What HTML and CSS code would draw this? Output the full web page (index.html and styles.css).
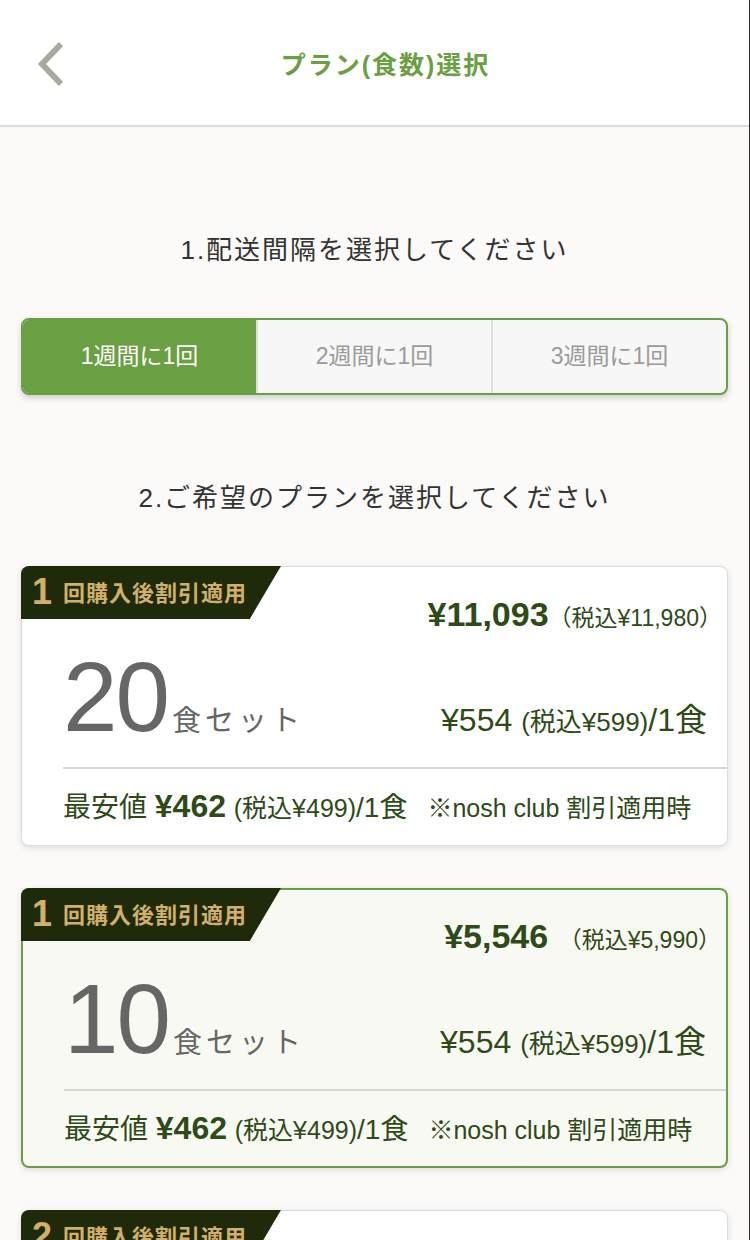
FILE: index.html
```html
<!DOCTYPE html>
<html lang="ja">

<head>
  <meta charset="UTF-8" />
  <meta name="viewport" content="width=device-width, initial-scale=1.0" />
  <title>プラン(食数)選択</title>
  <link rel="stylesheet" href="styles.css">
</head>

<body>
  <div id="page">
    <header class="topbar">
      <a class="back" href="#">
        <svg width="30" height="46" viewBox="0 0 30 46">
          <polyline points="25,3 6,23 25,43" fill="none" stroke="#a9aa9f" stroke-width="6" />
        </svg>
      </a>
      <h1>プラン(食数)選択</h1>
    </header>

    <main class="content">
      <h2 class="step step-first">1.配送間隔を選択してください</h2>
      <div class="tabs">
        <div class="tab active">1週間に1回</div>
        <div class="tab">2週間に1回</div>
        <div class="tab">3週間に1回</div>
      </div>

      <h2 class="step">2.ご希望のプランを選択してください</h2>

      <div class="card">
        <div class="ribbon"><span class="num">1</span>回購入後割引適用</div>
        <div class="total"><b>¥11,093</b><span class="tax">（税込¥11,980）</span></div>
        <div class="main-row">
          <div class="count"><span class="big">20</span><span class="unit">食セット</span></div>
          <div class="per">¥554 <small>(税込¥599)</small>/1食</div>
        </div>
        <div class="lowest">最安値 <b>¥462</b> <small>(税込¥499)</small>/1食<span class="note">※nosh club 割引適用時</span></div>
      </div>

      <div class="card selected">
        <div class="ribbon"><span class="num">1</span>回購入後割引適用</div>
        <div class="total"><b>¥5,546</b> <span class="tax">（税込¥5,990）</span></div>
        <div class="main-row">
          <div class="count"><span class="big">10</span><span class="unit">食セット</span></div>
          <div class="per">¥554 <small>(税込¥599)</small>/1食</div>
        </div>
        <div class="lowest">最安値 <b>¥462</b> <small>(税込¥499)</small>/1食<span class="note">※nosh club 割引適用時</span></div>
      </div>

      <div class="card">
        <div class="ribbon"><span class="num">2</span>回購入後割引適用</div>
        <div class="total"><b>¥5,546</b> <span class="tax">（税込¥5,990）</span></div>
      </div>
    </main>
  </div>
</body>

</html>
```

FILE: styles.css
```css
html,
body {
  margin: 0;
  padding: 0;
  height: 100%;
  overflow: hidden;
}

body {
  font-family: "Liberation Sans", "Noto Sans CJK JP", sans-serif;
  background-color: #fbfaf8;
  color: #333;
}

#page {
  width: 750px;
  min-height: 1240px;
  box-sizing: border-box;
  border-right: 1px solid #2a2a2a;
}

.topbar {
  position: relative;
  height: 125px;
  background-color: #fff;
  border-bottom: 2px solid #dcdcdc;
  display: flex;
  justify-content: center;
  align-items: center;
}

.topbar h1 {
  margin: 0 0 0 22px;
  font-size: 25px;
  font-weight: bold;
  letter-spacing: 2px;
  color: #6aa043;
}

.back {
  position: absolute;
  left: 36px;
  top: 41px;
  display: block;
  width: 30px;
  height: 46px;
}

.content {
  padding: 0 21px 0 21px;
}

.step {
  margin: 83px 0 48px;
  font-size: 26px;
  font-weight: normal;
  line-height: 40px;
  letter-spacing: 2px;
  text-align: center;
  color: #333;
}

.step-first {
  margin-top: 103px;
}

/* 配送間隔 */
.tabs {
  display: flex;
  height: 77px;
  box-sizing: border-box;
  border: 2px solid #6aa043;
  border-radius: 8px;
  overflow: hidden;
  background-color: #f7f7f7;
  box-shadow: 0 3px 6px rgba(0, 0, 0, 0.18);
}

.tab {
  flex: 1;
  display: flex;
  justify-content: center;
  align-items: center;
  padding-bottom: 6px;
  font-size: 23px;
  color: #9a9a9a;
  border-left: 2px solid #dedede;
}

.tab:first-child {
  border-left: none;
}

.tab.active {
  background-color: #6aa043;
  color: #fff;
}

/* プラン */
.card {
  position: relative;
  height: 280px;
  box-sizing: border-box;
  margin-bottom: 42px;
  padding: 30px 0 0 0;
  background-color: #fff;
  border: 1px solid #dcdcdc;
  border-radius: 8px;
  box-shadow: 0 2px 6px rgba(0, 0, 0, 0.12);
  color: #2e4a17;
}

.card.selected {
  border: 2px solid #6aa043;
  background-color: #f9f9f3;
  padding-top: 29px;
}

.ribbon {
  position: absolute;
  left: -1px;
  top: -1px;
  width: 260px;
  height: 53px;
  box-sizing: border-box;
  padding: 4px 0 0 11px;
  background-color: #1f2a0a;
  clip-path: polygon(0 0, 100% 0, 88% 100%, 0 100%);
  border-top-left-radius: 8px;
  color: #d2b06a;
  font-size: 22px;
  font-weight: bold;
  line-height: 44px;
  letter-spacing: 1px;
  white-space: nowrap;
}

.selected .ribbon {
  left: -2px;
  top: -2px;
}

.ribbon .num {
  font-size: 36px;
  margin-right: 10px;
  vertical-align: -3px;
}

.total {
  height: 34px;
  line-height: 34px;
  padding-right: 5px;
  text-align: right;
  word-spacing: 6px;
}

.total b {
  font-size: 34px;
}

.total .tax {
  font-size: 23px;
}

.main-row {
  display: flex;
  justify-content: space-between;
  align-items: baseline;
  height: 138px;
  box-sizing: border-box;
  padding: 17px 20px 0 0;
  margin-left: 41px;
  border-bottom: 2px solid #d6d6d6;
}

.count {
  color: #666;
}

.count .big {
  font-size: 98px;
  line-height: 98px;
  letter-spacing: -2px;
}

.count .unit {
  font-size: 29px;
  letter-spacing: 4px;
  margin-left: 4px;
}

.per {
  font-size: 32px;
}

.per small {
  font-size: 26px;
}

.lowest {
  padding: 20px 0 0 41px;
  font-size: 28px;
  line-height: 34px;
  white-space: nowrap;
}

.lowest b {
  font-size: 32px;
}

.lowest small {
  font-size: 25px;
}

.lowest .note {
  margin-left: 20px;
  font-size: 25px;
}
```
